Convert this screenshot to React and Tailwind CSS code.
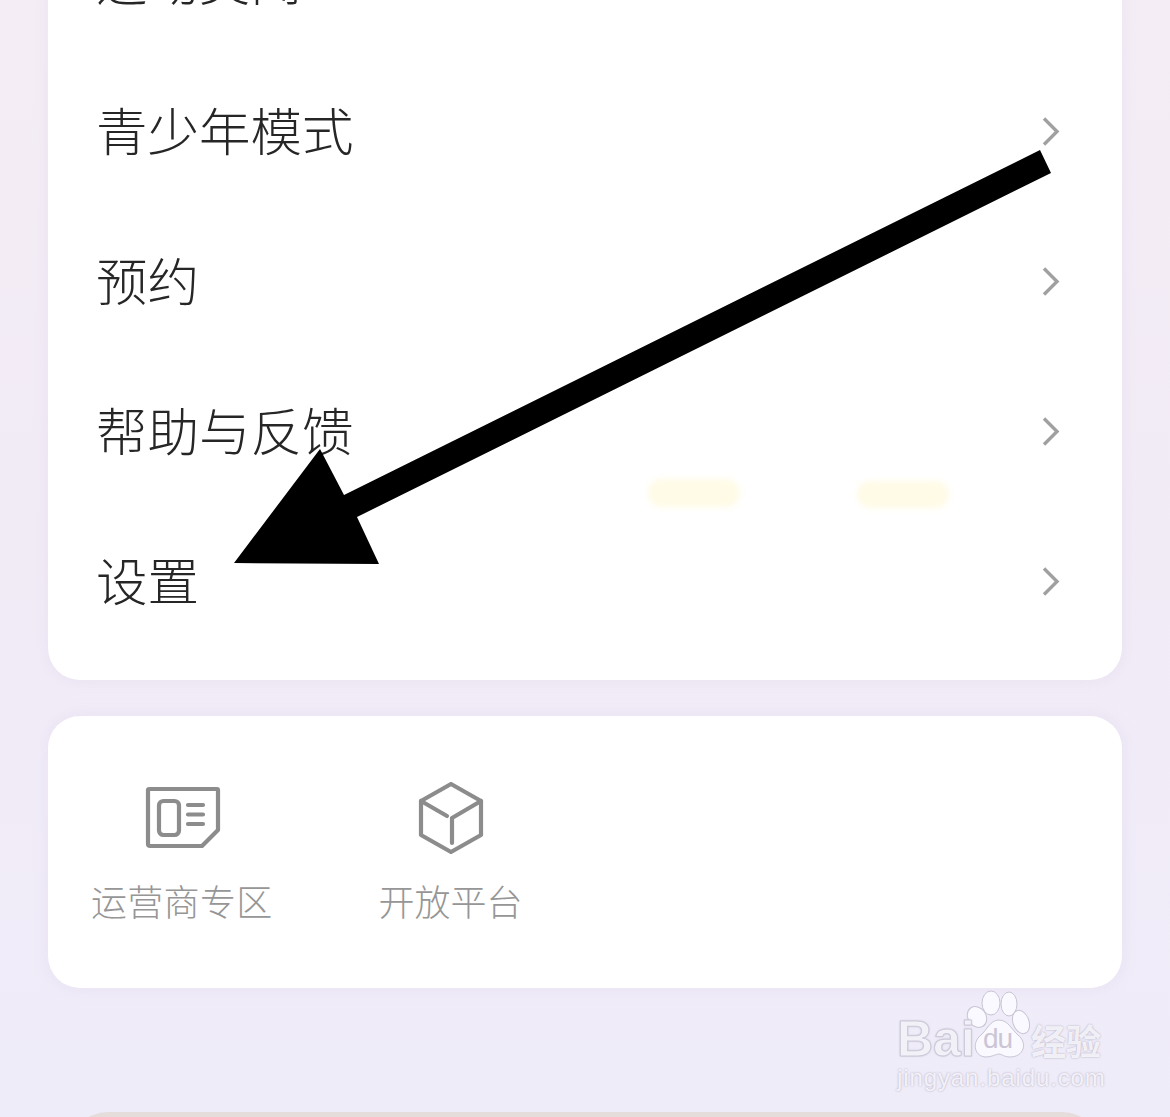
const cjk = 'font-["Noto_Sans_CJK_SC","Noto_Sans",sans-serif]';

const menuItems = ['运动美闻', '青少年模式', '预约', '帮助与反馈', '设置'];

const Chevron = () => (
  <svg width="20" height="32" viewBox="0 0 20 32" fill="none" className="shrink-0">
    <path d="M3 3.5 L16 16.5 L3 29.5" stroke="#a0a0a0" strokeWidth="3.4" />
  </svg>
);

const SimIcon = () => (
  <svg width="78" height="72" viewBox="0 0 78 72" fill="none" stroke="#8c8c8c" strokeWidth="4.2" strokeLinecap="round" strokeLinejoin="round">
    <path d="M5 8 Q5 7 7 7 H74 Q75 7 75 8 V48 L59 64 H7 Q5 64 5 62 Z" />
    <rect x="16" y="19" width="20" height="34" rx="4.5" />
    <path d="M45 23 H60 M45 32.5 H60 M45 42 H60" />
  </svg>
);

const CubeIcon = () => (
  <svg width="66" height="72" viewBox="0 0 66 72" fill="none" stroke="#8c8c8c" strokeWidth="4.2" strokeLinecap="round" strokeLinejoin="round">
    <path d="M33 2 L63 19 V53 L33 70 L3 53 V19 Z" />
    <path d="M3 19 L29 34 M63 19 L34 36 V61" />
  </svg>
);

const Watermark = () => (
  <div className="absolute left-[895px] top-[990px] w-[215px] h-[102px] text-white/90 [text-shadow:0_0_2px_rgba(110,100,130,0.55)]">
    <svg width="140" height="72" viewBox="895 990 140 72" className="absolute left-0 top-0" fill="#fbfaff" fillOpacity="0.92" stroke="#c9c4d3" strokeWidth="1">
      <ellipse cx="991" cy="1003" rx="9" ry="12" />
      <ellipse cx="1009" cy="1004" rx="8" ry="12" />
      <ellipse cx="977" cy="1017" rx="9" ry="11" transform="rotate(-35 977 1017)" />
      <ellipse cx="1021" cy="1022" rx="8" ry="12" transform="rotate(-20 1021 1022)" />
      <path d="M999 1020 C1008 1020 1012 1030 1018 1035 C1028 1043 1024 1057 1010 1057 C1004 1057 1002 1054 999 1054 C996 1054 992 1057 986 1057 C975 1057 971 1043 981 1035 C987 1030 990 1020 999 1020 Z" />
    </svg>
    <span className='absolute left-[2px] top-[21px] font-["Liberation_Sans",sans-serif] font-bold text-[50px] leading-[56px] text-[#fbfaff]/90 [-webkit-text-stroke:1px_#cfcad9]'>Bai</span>
    <span className='absolute left-[88px] top-[34px] font-["Liberation_Sans",sans-serif] text-[28px] leading-[30px] tracking-[-1px] text-[#cbc6d5] [text-shadow:none]'>du</span>
    <span className={`absolute left-[136px] top-[30px] ${cjk} font-bold text-[35px] leading-[40px] text-[#fbfaff]/90`}>经验</span>
    <span className='absolute left-[2px] top-[74px] font-["Liberation_Sans",sans-serif] text-[24px] leading-[28px] tracking-[0.9px] text-[#fbfaff]/90 whitespace-nowrap'>jingyan.baidu.com</span>
  </div>
);

const App = () => {
  return (
    <div className={`relative h-[1117px] overflow-hidden bg-[linear-gradient(180deg,#f4edf5_0%,#f1ebf6_50%,#efecf9_100%)] ${cjk}`}>
      <div className="flex flex-col -mt-[94px] px-12">
        <div className="bg-white rounded-[32px] pb-6 shadow-[0_0_14px_rgba(200,180,220,0.18)]">
          {menuItems.map((item) => (
            <div key={item} className="h-[150px] flex items-center justify-between pl-[48px] pr-[61px]">
              <span className="-mt-[5px] text-[51.5px] leading-[60px] font-light text-[#262626]">{item}</span>
              <Chevron />
            </div>
          ))}
        </div>

        <div className="mt-9 h-[272px] bg-white rounded-[32px] pt-[66px] pl-[43px] flex gap-[106px] shadow-[0_0_14px_rgba(200,180,220,0.18)]">
          <div className="flex flex-col items-center gap-[22px]">
            <SimIcon />
            <span className="text-[36px] leading-[48px] font-light tracking-[0.3px] text-[#969696]">运营商专区</span>
          </div>
          <div className="flex flex-col items-center gap-[22px]">
            <CubeIcon />
            <span className="text-[36px] leading-[48px] font-light text-[#969696]">开放平台</span>
          </div>
        </div>

        <div className="mt-[124px] mx-5 h-40 rounded-t-[40px] bg-[#e5dcdc]" />
      </div>

      {/* pale marks left on the card */}
      <div className="absolute left-[648px] top-[479px] w-[92px] h-[28px] rounded-full bg-[#fffbe6] blur-[3px]" />
      <div className="absolute left-[857px] top-[481px] w-[92px] h-[27px] rounded-full bg-[#fffbe6] blur-[3px]" />

      {/* annotation arrow drawn over the screenshot */}
      <svg width="1170" height="1117" viewBox="0 0 1170 1117" className="absolute left-0 top-0">
        <path d="M1040 150 L1051 173 L357 517 L379 564 L234 563 L320 449 L344 495 Z" fill="#000" />
      </svg>

      <Watermark />
    </div>
  );
};

export default App;
